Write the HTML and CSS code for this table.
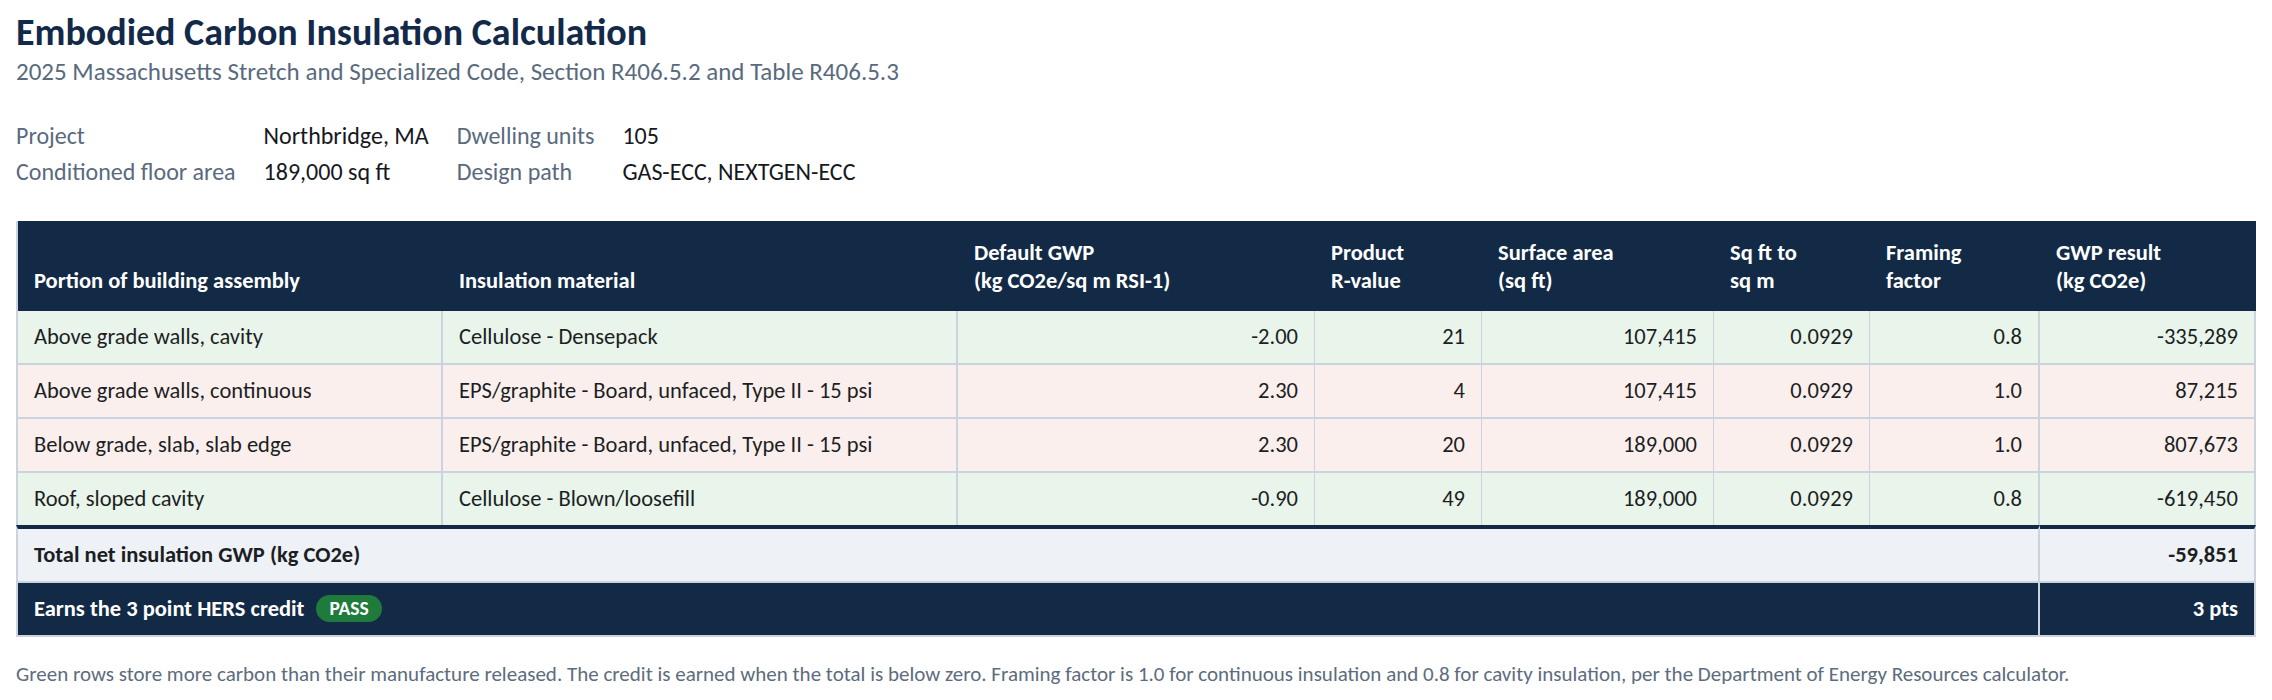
FILE: index.html
```html
<!DOCTYPE html>
<html lang="en">
<head>
<meta charset="utf-8">
<title>Embodied Carbon Insulation Calculation</title>
<link rel="stylesheet" href="styles.css">
</head>
<body>
<main class="page">
  <h1 class="title">Embodied Carbon Insulation Calculation</h1>
  <p class="subtitle">2025 Massachusetts Stretch and Specialized Code, Section R406.5.2 and Table R406.5.3</p>

  <dl class="meta">
    <dt>Project</dt><dd>Northbridge, MA</dd>
    <dt>Dwelling units</dt><dd>105</dd>
    <dt>Conditioned floor area</dt><dd>189,000 sq ft</dd>
    <dt>Design path</dt><dd>GAS-ECC, NEXTGEN-ECC</dd>
  </dl>

  <table class="calc">
    <thead>
      <tr>
        <th class="c1">Portion of building assembly</th>
        <th class="c2">Insulation material</th>
        <th class="c3">Default GWP<br>(kg CO2e/sq m RSI-1)</th>
        <th class="c4">Product<br>R-value</th>
        <th class="c5">Surface area<br>(sq ft)</th>
        <th class="c6">Sq ft to<br>sq m</th>
        <th class="c7">Framing<br>factor</th>
        <th class="c8">GWP result<br>(kg CO2e)</th>
      </tr>
    </thead>
    <tbody>
      <tr class="store">
        <td>Above grade walls, cavity</td>
        <td>Cellulose - Densepack</td>
        <td class="num">-2.00</td>
        <td class="num">21</td>
        <td class="num">107,415</td>
        <td class="num">0.0929</td>
        <td class="num">0.8</td>
        <td class="num">-335,289</td>
      </tr>
      <tr class="emit">
        <td>Above grade walls, continuous</td>
        <td>EPS/graphite - Board, unfaced, Type II - 15 psi</td>
        <td class="num">2.30</td>
        <td class="num">4</td>
        <td class="num">107,415</td>
        <td class="num">0.0929</td>
        <td class="num">1.0</td>
        <td class="num">87,215</td>
      </tr>
      <tr class="emit">
        <td>Below grade, slab, slab edge</td>
        <td>EPS/graphite - Board, unfaced, Type II - 15 psi</td>
        <td class="num">2.30</td>
        <td class="num">20</td>
        <td class="num">189,000</td>
        <td class="num">0.0929</td>
        <td class="num">1.0</td>
        <td class="num">807,673</td>
      </tr>
      <tr class="store">
        <td>Roof, sloped cavity</td>
        <td>Cellulose - Blown/loosefill</td>
        <td class="num">-0.90</td>
        <td class="num">49</td>
        <td class="num">189,000</td>
        <td class="num">0.0929</td>
        <td class="num">0.8</td>
        <td class="num">-619,450</td>
      </tr>
    </tbody>
    <tfoot>
      <tr class="total">
        <td colspan="7">Total net insulation GWP (kg CO2e)</td>
        <td class="num">-59,851</td>
      </tr>
      <tr class="credit">
        <td colspan="7">Earns the 3 point HERS credit <span class="badge">PASS</span></td>
        <td class="num">3 pts</td>
      </tr>
    </tfoot>
  </table>

  <p class="note">Green rows store more carbon than their manufacture released. The credit is earned when the total is below zero. Framing factor is 1.0 for continuous insulation and 0.8 for cavity insulation, per the Department of Energy Resources calculator.</p>
</main>
</body>
</html>
```

FILE: styles.css
```css
html, body {
  margin: 0;
  padding: 0;
  background: #ffffff;
}

body {
  font-family: Carlito, Calibri, "Liberation Sans", sans-serif;
  color: #1b1f24;
}

.page {
  padding: 10px 16px 0;
}

.title {
  margin: 0;
  font-size: 38px;
  line-height: 45px;
  font-weight: 700;
  color: #13294a;
}

.subtitle {
  margin: 2px 0 0;
  font-size: 25px;
  line-height: 30px;
  color: #5a6a7e;
}

.meta {
  display: grid;
  grid-template-columns: repeat(4, auto);
  justify-content: start;
  column-gap: 28px;
  row-gap: 8px;
  margin: 35px 0 0;
  font-size: 24px;
  line-height: 28px;
}

.meta dt {
  color: #5a6a7e;
}

.meta dd {
  margin: 0;
  color: #15191e;
}

.calc {
  margin-top: 35px;
  width: 2240px;
  border-collapse: separate;
  border-spacing: 0;
  table-layout: fixed;
  font-size: 22.5px;
  line-height: 28px;
}

.calc th,
.calc td {
  box-sizing: border-box;
  padding: 12px 16px;
  text-align: left;
  border-right: 1px solid #cbd4de;
  border-bottom: 2px solid #cbd4de;
}

.calc th:first-child,
.calc td:first-child {
  border-left: 2px solid #cbd4de;
}

.calc th:nth-child(1),
.calc th:nth-child(2),
.calc th:nth-child(7),
.calc th:nth-child(8),
.calc tbody td:nth-child(1),
.calc tbody td:nth-child(2),
.calc tbody td:nth-child(7),
.calc tbody td:nth-child(8),
.calc tfoot td {
  border-right-width: 2px;
}

.calc thead th {
  background: #132a46;
  color: #ffffff;
  font-weight: 700;
  vertical-align: bottom;
  padding-top: 18px;
  padding-bottom: 16px;
  border-color: #132a46;
  border-bottom: 0;
}

.c1 { width: 427px; }
.c2 { width: 515px; }
.c3 { width: 357px; }
.c4 { width: 167px; }
.c5 { width: 232px; }
.c6 { width: 156px; }
.c7 { width: 170px; }
.c8 { width: 216px; }

.calc .num {
  text-align: right;
}

.store td {
  background: #e9f4ea;
}

.emit td {
  background: #fbefed;
}

.calc tbody tr:last-child td {
  border-bottom: 0;
}

.total td {
  background: #eef1f6;
  font-weight: 700;
  border-top: 4px solid #132a46;
}

.credit td {
  background: #132a46;
  color: #ffffff;
  font-weight: 700;
}

.badge {
  display: inline-block;
  margin-left: 7px;
  padding: 0 13px;
  border-radius: 14px;
  background: #1e7b3c;
  color: #ffffff;
  font-size: 19.5px;
  line-height: 27px;
  vertical-align: 1px;
}

.note {
  margin: 24px 0 0;
  font-size: 21px;
  line-height: 26px;
  color: #5d6c7e;
}
```
